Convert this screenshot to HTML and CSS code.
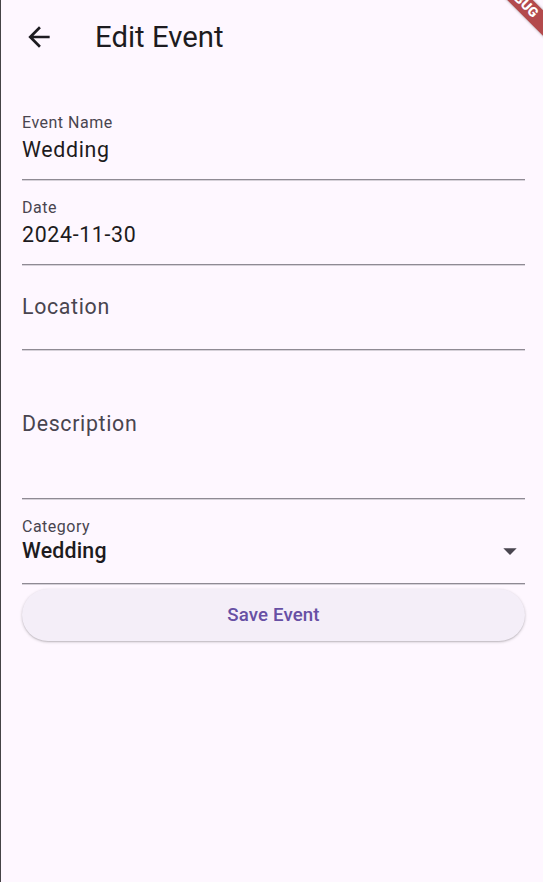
FILE: index.html
```html
<!DOCTYPE html>
<html lang="en">
<head>
<meta charset="utf-8">
<title>Edit Event</title>
<link rel="stylesheet" href="styles.css">
</head>
<body>
<div class="screen">
  <header class="appbar">
    <svg class="back" viewBox="0 0 24 24" width="32" height="32" aria-hidden="true">
      <path d="M20 11H7.83l5.59-5.59L12 4l-8 8 8 8 1.41-1.41L7.83 13H20v-2z" fill="#1d1b20"/>
    </svg>
    <h1 class="title">Edit Event</h1>
  </header>

  <main class="form">
    <div class="field">
      <div class="label">Event Name</div>
      <div class="value">Wedding</div>
    </div>
    <div class="field">
      <div class="label">Date</div>
      <div class="value">2024-11-30</div>
    </div>
    <div class="field field-empty">
      <div class="placeholder">Location</div>
    </div>
    <div class="field field-multi">
      <div class="placeholder">Description</div>
    </div>
    <div class="field">
      <div class="label">Category</div>
      <div class="dropdown-row">
        <div class="value value-strong">Wedding</div>
        <svg class="drop" viewBox="0 0 24 24" width="32" height="32" aria-hidden="true">
          <path d="M7 10l5 5 5-5z" fill="#49454f"/>
        </svg>
      </div>
    </div>
    <button class="save">Save Event</button>
  </main>

  <div class="banner"><span>DEBUG</span></div>
</div>
</body>
</html>
```

FILE: styles.css
```css
html, body {
  margin: 0;
  padding: 0;
  background: #fef7ff;
}

body {
  font-family: Roboto, "Noto Sans", sans-serif;
  color: #1d1b20;
}

.screen {
  position: relative;
  overflow: hidden;
  min-height: 882px;
  border-left: 1px solid #454346;
  box-sizing: border-box;
}

.appbar {
  height: 74px;
  display: flex;
  align-items: center;
}

.back {
  display: block;
  margin-left: 21.5px;
  flex: none;
}

.title {
  margin: 0 0 0 40.5px;
  font-size: 29.3px;
  font-weight: 400;
  line-height: 36px;
  color: #1d1b20;
}

.form {
  padding: 21px 18px 0 21px;
  display: flex;
  flex-direction: column;
}

.field {
  height: 85px;
  box-sizing: border-box;
  padding-top: 18px;
  border-bottom: 1px solid #8f8a94;
  box-shadow: 0 1px 0 #d6d1d9;
}

.label {
  font-size: 16px;
  line-height: 20px;
  color: #49454f;
  letter-spacing: 0.5px;
}

.value {
  margin-top: 3px;
  font-size: 21.33px;
  line-height: 28px;
  letter-spacing: 0.67px;
  color: #1d1b20;
}

.field-empty {
  padding-top: 28px;
}

.field-multi {
  height: 149px;
  padding-top: 60px;
}

.placeholder {
  font-size: 21.33px;
  line-height: 28px;
  letter-spacing: 0.67px;
  color: #49454f;
}

.dropdown-row {
  display: flex;
  align-items: center;
  justify-content: space-between;
  height: 28px;
}

.value-strong {
  margin-top: 0;
  font-weight: 500;
  letter-spacing: 0.2px;
}

.drop {
  display: block;
  flex: none;
  margin-right: -1px;
}

.save {
  margin-top: 5px;
  height: 52px;
  border: none;
  border-radius: 26px;
  background: #f4eef8;
  box-shadow: 0 1px 3px rgba(0, 0, 0, 0.22), 0 1px 1px rgba(0, 0, 0, 0.08);
  font-family: Roboto, "Noto Sans", sans-serif;
  font-size: 18.67px;
  font-weight: 500;
  letter-spacing: 0.13px;
  color: #6750a4;
  cursor: pointer;
}

.banner {
  position: absolute;
  left: 469px;
  top: -9px;
  width: 100px;
  height: 18px;
  background: #b34a4c;
  transform: rotate(45deg);
  display: flex;
  align-items: center;
  justify-content: center;
  box-shadow: 0 0 3px rgba(0, 0, 0, 0.35);
}

.banner span {
  font-family: Roboto, "Noto Sans", sans-serif;
  font-size: 13.6px;
  font-weight: 900;
  line-height: 1;
  color: #ffffff;
  letter-spacing: 0.2px;
}
```
